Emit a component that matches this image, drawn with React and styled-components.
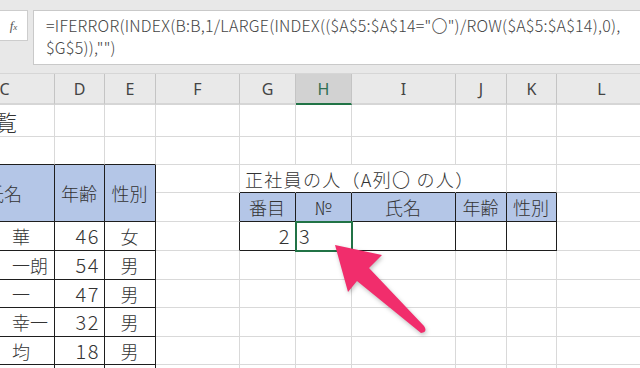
import React from 'react';
import styled, { createGlobalStyle } from 'styled-components';

const GlobalStyle = createGlobalStyle`
    html, body {
        margin: 0;
        padding: 0;
        background: #ffffff;
    }
    body {
        width: 640px;
        height: 368px;
        overflow: hidden;
        font-family: "Noto Sans CJK JP", "Noto Sans", sans-serif;
    }
`;

// visible part of the sheet starts inside column C
const COLS = '100px 50px 51px 84px 56px 56px 104px 51px 50px 90px';
const ROWS = '32px 28px 28px 29px 29px 29px 28px 29px 28px 28px';

const GRID = '#d9d9d9';
const INK = '#1e1e1e';
const BLUE = '#b4c6e7';

const columns = ['C', 'D', 'E', 'F', 'G', 'H', 'I', 'J', 'K', 'L'];

const people = [
    { name: '田中　華', age: 46, sex: '女' },
    { name: '鈴木　一朗', age: 54, sex: '男' },
    { name: '佐藤　一', age: 47, sex: '男' },
    { name: '高橋　幸一', age: 32, sex: '男' },
    { name: '伊藤　均', age: 18, sex: '男' },
];

// one entry per grid slot, read left to right, row by row
const buildCells = () => {
    const cells = [];
    const empty = (n, extra = {}) => {
        for (let i = 0; i < n; i++) cells.push({ ...extra });
    };

    // row 1 : title
    cells.push({ text: '社員一覧', kind: 'title', align: 'right', padRight: 37 });
    empty(9);

    // row 2 : blank, top edge of left table
    empty(3, { bottom: INK });
    empty(7);

    // row 3 : left headers (two rows high) + right caption
    cells.push({ text: '氏名', head: true, span: 2, right: INK, bottom: INK });
    cells.push({ text: '年齢', head: true, span: 2, right: INK, bottom: INK });
    cells.push({ text: '性別', head: true, span: 2, right: INK, bottom: INK });
    cells.push({});
    cells.push({ text: '正社員の人（A列〇 の人）', align: 'left', kind: 'caption', bottom: INK, right: 'transparent' });
    cells.push({ bottom: INK, right: 'transparent' });
    cells.push({ bottom: INK, right: 'transparent' });
    cells.push({ bottom: INK });
    cells.push({ bottom: INK });
    cells.push({});

    // row 4 : right headers
    cells.push({ right: INK });
    ['番目', '№', '氏名', '年齢', '性別'].forEach((t) => {
        cells.push({ text: t, head: true, right: INK, bottom: INK });
    });
    cells.push({});

    // data rows
    people.forEach((p, i) => {
        cells.push({ text: p.name, align: 'left', right: INK, bottom: INK });
        cells.push({ text: String(p.age), kind: 'number', align: 'right', right: INK, bottom: INK });
        cells.push({ text: p.sex, right: INK, bottom: INK });
        if (i === 0) {
            cells.push({ right: INK });
            cells.push({ text: '2', kind: 'number', align: 'right', right: INK, bottom: INK });
            cells.push({ text: '3', kind: 'number', align: 'left', right: INK, bottom: INK, selected: true });
            cells.push({ right: INK, bottom: INK });
            cells.push({ right: INK, bottom: INK });
            cells.push({ right: INK, bottom: INK });
            cells.push({});
        } else {
            empty(7);
        }
    });

    // last partial row
    empty(3, { right: INK });
    empty(7);
    return cells;
};

const App = () => {
    const cells = buildCells();
    return (
        <>
            <GlobalStyle />
            <Window>
                <FormulaBar>
                    <FxBox>
                        <Fx>f<sub>x</sub></Fx>
                    </FxBox>
                    <FormulaBox>
                        <FormulaLine>=IFERROR(INDEX(B:B,1/LARGE(INDEX(($A$5:$A$14="〇")/ROW($A$5:$A$14),0),</FormulaLine>
                        <FormulaLine>$G$5)),"")</FormulaLine>
                    </FormulaBox>
                </FormulaBar>
                <ColumnHeaders>
                    {columns.map((c) => (
                        <ColumnHeader key={c} active={c === 'H'}>{c}</ColumnHeader>
                    ))}
                </ColumnHeaders>
                <SheetArea>
                    <Sheet>
                        {cells.map((cell, i) => (
                            <Cell
                                key={i}
                                span={cell.span}
                                head={cell.head}
                                align={cell.align}
                                padRight={cell.padRight}
                                right={cell.right}
                                bottom={cell.bottom}
                                selected={cell.selected}
                                kind={cell.kind}
                            >
                                {cell.text && <CellText>{cell.text}</CellText>}
                            </Cell>
                        ))}
                    </Sheet>
                    <Arrow viewBox="320 232 116 108" width="116" height="108">
                        <path
                            d="M335 245 L382 255 L369 268 L424 326 Q428 332 421 333 L357 281 L348 292 Z"
                            fill="#f12d6c"
                        />
                    </Arrow>
                </SheetArea>
            </Window>
        </>
    );
};

export default App;

const Window = styled.div`
    width: 640px;
    height: 368px;
    overflow: hidden;
    background: #ffffff;
    display: flex;
    flex-direction: column;
`;

const FormulaBar = styled.div`
    flex-shrink: 0;
    height: 73px;
    box-sizing: border-box;
    background: #e8e8e8;
    padding-top: 10px;
    display: flex;
    align-items: flex-start;
    gap: 5px;
`;

const FxBox = styled.div`
    width: 28px;
    height: 31px;
    box-sizing: border-box;
    background: #ffffff;
    border: 1px solid #cdcdcd;
    border-left: none;
    display: flex;
    align-items: center;
    justify-content: center;
`;

const Fx = styled.span`
    font-family: "Liberation Serif", serif;
    font-style: italic;
    font-size: 13px;
    color: #555;
    sub {
        font-size: 9px;
        vertical-align: baseline;
    }
`;

const FormulaBox = styled.div`
    flex: 1;
    height: 55px;
    box-sizing: border-box;
    background: #ffffff;
    border: 1px solid #c9c9c9;
    border-right: none;
    padding: 3px 0 0 12px;
    display: flex;
    flex-direction: column;
`;

const FormulaLine = styled.div`
    font-family: "Noto Sans CJK JP", "Noto Sans", sans-serif;
    font-size: 16px;
    font-weight: 300;
    letter-spacing: 0.25px;
    line-height: 22px;
    color: #444;
    white-space: nowrap;
`;

const ColumnHeaders = styled.div`
    flex-shrink: 0;
    display: grid;
    grid-template-columns: ${COLS};
    height: 32px;
    margin-left: -45px;
    background: #e9e9e9;
    border-top: 1px solid #d6d6d6;
    box-sizing: border-box;
`;

const ColumnHeader = styled.div`
    display: flex;
    align-items: center;
    justify-content: center;
    font-family: "Noto Sans", sans-serif;
    font-size: 16px;
    color: ${(p) => (p.active ? '#2f6f52' : '#444')};
    background: ${(p) => (p.active ? '#d2d2d2' : 'transparent')};
    border-right: 1px solid #c4c4c4;
    border-bottom: 2px solid ${(p) => (p.active ? '#217346' : '#d6d6d6')};
    box-sizing: border-box;
`;

const SheetArea = styled.div`
    position: relative;
    flex: 1;
    min-height: 0;
`;

const Sheet = styled.div`
    display: grid;
    grid-template-columns: ${COLS};
    grid-template-rows: ${ROWS};
    margin-left: -45px;
`;

const fontFor = {
    title: '300 22px "Noto Sans CJK JP", sans-serif',
    caption: '300 18px "Noto Sans CJK JP", sans-serif',
    number: '300 20px "Noto Sans CJK JP", sans-serif',
};

const Cell = styled.div`
    grid-row: ${(p) => (p.span ? `span ${p.span}` : 'auto')};
    display: flex;
    align-items: center;
    justify-content: ${(p) =>
        p.align === 'left' ? 'flex-start' : p.align === 'right' ? 'flex-end' : 'center'};
    padding: 0 ${(p) => (p.padRight != null ? p.padRight : 4)}px 0 ${(p) => (p.kind === 'caption' ? 5 : 3)}px;
    box-sizing: border-box;
    min-width: 0;
    background: ${(p) => (p.head ? BLUE : 'transparent')};
    border-right: 1px solid ${(p) => p.right || GRID};
    border-bottom: 1px solid ${(p) => p.bottom || GRID};
    outline: ${(p) => (p.selected ? '2px solid #217346' : 'none')};
    outline-offset: -1px;
    position: ${(p) => (p.selected ? 'relative' : 'static')};
    z-index: ${(p) => (p.selected ? 1 : 'auto')};
    font: ${(p) => fontFor[p.kind] || '300 18px "Noto Sans CJK JP", sans-serif'};
    letter-spacing: ${(p) => (p.kind === 'caption' ? '1.3px' : p.kind === 'number' ? '1.5px' : '0')};
    color: #333;
    white-space: nowrap;
    overflow: visible;
`;

const CellText = styled.span`
    line-height: 1;
`;

const Arrow = styled.svg`
    position: absolute;
    left: 320px;
    top: 127px;
    z-index: 2;
    filter: drop-shadow(1px 2px 2px rgba(0, 0, 0, 0.25));
`;
